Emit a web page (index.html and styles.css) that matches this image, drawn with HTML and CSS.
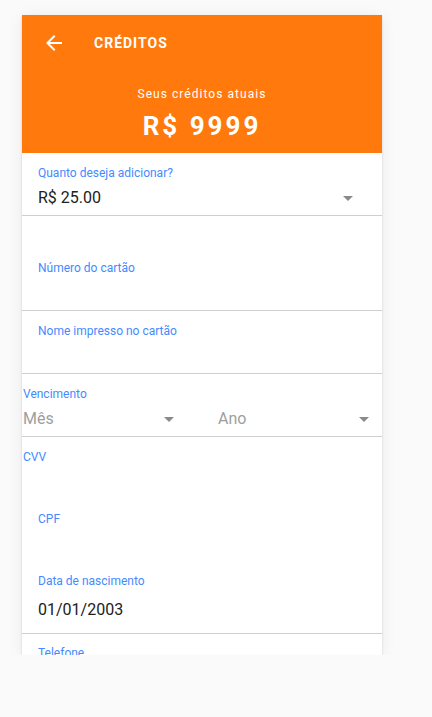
FILE: index.html
```html
<!DOCTYPE html>
<html>
<head>
<meta charset="utf-8">
<title>Créditos</title>
<link rel="stylesheet" href="styles.css">
</head>
<body>
<div class="card">
	<div class="header">
		<div class="toolbar">
			<svg class="back" viewBox="0 0 24 24" width="24" height="24"><path d="M20 11H7.83l5.59-5.59L12 4l-8 8 8 8 1.41-1.41L7.83 13H20v-2z"/></svg>
			<span class="title">CRÉDITOS</span>
		</div>
		<div class="balance-label">Seus créditos atuais</div>
		<div class="balance">R$ 9999</div>
	</div>

	<div class="form">
		<div class="field line">
			<div class="label">Quanto deseja adicionar?</div>
			<div class="value select amount"><span>R$ 25.00</span><i class="caret"></i></div>
		</div>
		<div class="field line tall">
			<div class="label">Número do cartão</div>
			<div class="value"></div>
		</div>
		<div class="field line">
			<div class="label">Nome impresso no cartão</div>
			<div class="value"></div>
		</div>
		<div class="field line flush">
			<div class="label">Vencimento</div>
			<div class="value pair">
				<div class="select half"><span class="placeholder">Mês</span><i class="caret"></i></div>
				<div class="select half"><span class="placeholder">Ano</span><i class="caret"></i></div>
			</div>
		</div>
		<div class="field flush">
			<div class="label">CVV</div>
			<div class="value"></div>
		</div>
		<div class="field">
			<div class="label">CPF</div>
			<div class="value"></div>
		</div>
		<div class="field line date">
			<div class="label">Data de nascimento</div>
			<div class="value">01/01/2003</div>
		</div>
		<div class="field line last">
			<div class="label">Telefone</div>
			<div class="value"></div>
		</div>
	</div>
</div>
</body>
</html>
```

FILE: styles.css
```css
body
{
margin: 0;
background-color: #fafafa;
font-family: Roboto, "Liberation Sans", sans-serif;
}

.card
{
width: 360px;
height: 640px;
margin: 15px 0 0 22px;
background-color: #fff;
overflow: hidden;
box-shadow: 0 2px 14px rgba(0,0,0,.07), 0 1px 2px rgba(0,0,0,.14);
}

/* orange top block */
.header
{
background-color: #ff790c;
color: #fff;
height: 138px;
text-align: center;
}

.toolbar
{
display: flex;
align-items: center;
height: 56px;
padding-left: 20px;
}
.back {fill: #fff; flex: none;}
.title
{
margin-left: 28px;
font-size: 14px;
font-weight: 700;
letter-spacing: 1px;
}

.balance-label
{
margin-top: 15px;
font-size: 12px;
line-height: 16px;
letter-spacing: 1.05px;
}
.balance
{
margin-top: 8px;
font-size: 26px;
line-height: 32px;
font-weight: 700;
letter-spacing: 3px;
}

/* form fields */
.field
{
padding: 13px 16px 7px 16px;
}
.field.line {border-bottom: 1px solid #cfcfcf;}
.field.tall {padding-top: 45px;}
.field.flush {padding-left: 1px;}
.field.date {padding-bottom: 13px;}
.field.date .value {margin-top: 12px;}
.field.last {padding-top: 12px;}

.label
{
color: #448aff;
font-size: 12px;
line-height: 14px;
}

.value
{
margin-top: 8px;
height: 20px;
font-size: 16px;
line-height: 20px;
color: #212121;
}

.select
{
display: flex;
align-items: center;
justify-content: space-between;
}
.amount {padding-right: 13px;}

.pair {display: flex; gap: 40px;}
.half {flex: none; width: 155px; padding-right: 4px; box-sizing: border-box;}
.placeholder {color: #9e9e9e;}

.caret
{
width: 0;
height: 0;
border-left: 5px solid transparent;
border-right: 5px solid transparent;
border-top: 5px solid #8a8a8a;
}
```
